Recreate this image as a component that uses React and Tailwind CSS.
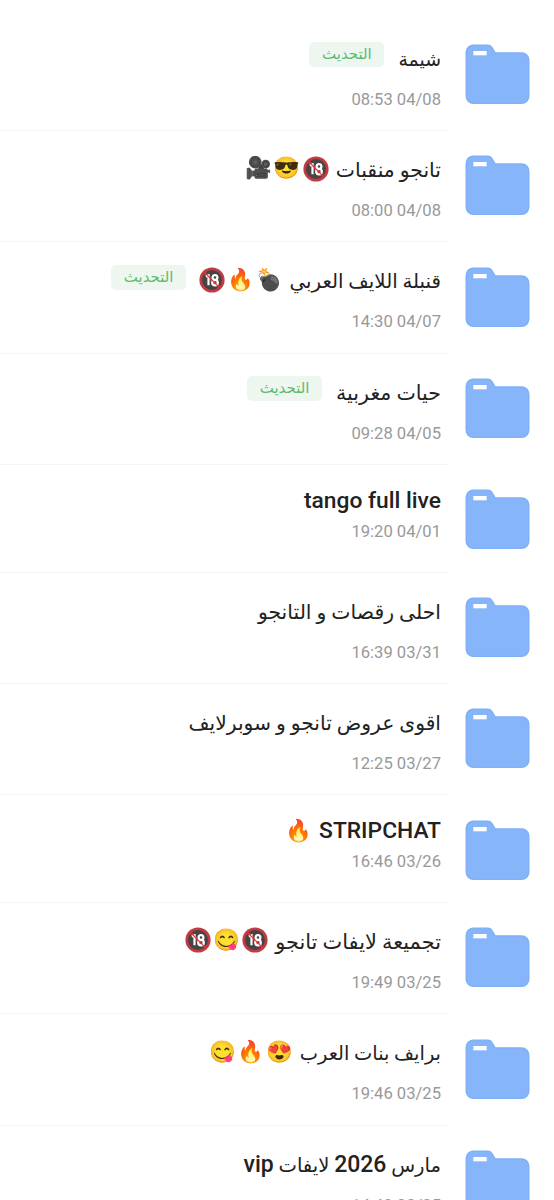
const folders = [
    { title: "شيمة", date: "08:53 04/08", updated: true, size: "text-[18.9px]" },
    { title: "تانجو منقبات", emojis: ["🔞", "😎", "🎥"], date: "08:00 04/08", size: "text-[20.4px]" },
    { title: "قنبلة اللايف العربي", emojis: ["💣", "🔥", "🔞"], date: "14:30 04/07", updated: true, size: "text-[19.8px]" },
    { title: "حيات مغربية", date: "09:28 04/05", updated: true, size: "text-[20.6px]" },
    { title: "tango full live", date: "19:20 04/01", latin: true },
    { title: "احلى رقصات و التانجو", date: "16:39 03/31", size: "text-[20.4px]" },
    { title: "اقوى عروض تانجو و سوبرلايف", date: "12:25 03/27", size: "text-[20.3px]" },
    { title: "STRIPCHAT", emojis: ["🔥"], date: "16:46 03/26", latin: true },
    { title: "تجميعة لايفات تانجو", emojis: ["🔞", "😋", "🔞"], date: "19:49 03/25", size: "text-[20.9px]" },
    { title: "برايف بنات العرب", emojis: ["😍", "🔥", "😋"], date: "19:46 03/25", size: "text-[19.4px]" },
    { title: "مارس 2026 لايفات vip", date: "14:49 03/25", size: "text-[19.6px]" },
];

function FolderIcon() {
    return (
        <svg width="65" height="61" viewBox="0 0 66 61" preserveAspectRatio="none" className="flex-none">
            <path
                d="M8.5.5H23c2.200 0 3.700.8 4.800 2.600L31 8.200H57.500a8 8 0 0 1 8 8V52a8 8 0 0 1-8 8H8.500a8 8 0 0 1-8-8V8.500a8 8 0 0 1 8-8Z"
                fill="#80b0f7"
            />
            <path
                d="M9 2H23c1.600 0 2.600.6 3.500 2L30.200 9.700H57a7 7 0 0 1 7 7V51.500a7 7 0 0 1-7 7H9a7 7 0 0 1-7-7V9a7 7 0 0 1 7-7Z"
                fill="#87b5fa"
            />
            <rect x="8.500" y="7" width="13.500" height="4.300" fill="#fff" />
        </svg>
    );
}

function Badge() {
    return (
        <span className="flex h-[25px] w-[75px] flex-none items-center justify-center rounded-[5px] bg-[#edf7f0] font-['DejaVu_Sans',sans-serif] text-[15px] text-[#5dba70]">
            التحديث
        </span>
    );
}

// Latin runs and digits are heavier than the Arabic around them
function Title({ text, latin, size }) {
    if (latin) return <span className="text-[22.8px]">{text}</span>;

    return (
        <span className={`pt-1 font-['DejaVu_Sans',sans-serif] font-normal [word-spacing:-1.5px] ${size}`}>
            {text.split(/([a-z0-9]+)/).map((part, idx) => (
                idx % 2 === 1
                    ? <span key={idx} className="font-[Roboto,sans-serif] text-[23px] font-medium">{part}</span>
                    : part
            ))}
        </span>
    );
}

function AdultSign() {
    return (
        <svg viewBox="0 0 26 26" role="img" aria-label="🔞" className="h-[26px] w-[26px] self-center">
            <circle cx="13" cy="13" r="12.600" fill="#c23a42" />
            <circle cx="13" cy="13" r="10" fill="#484444" />
            <path d="M5.500 5.500 20.500 20.500" stroke="#d8323c" strokeWidth="2.400" />
            <g fill="none" stroke="#fff" strokeWidth="2.200">
                <path d="M6.800 9.600 9.500 8.400V18.300" />
                <circle cx="16" cy="10.600" r="2.400" />
                <circle cx="16" cy="15.600" r="2.800" />
            </g>
            <path d="M7 7 18.800 18.800" stroke="#d8323c" strokeWidth="1.100" />
        </svg>
    );
}

function Emojis({ items }) {
    return (
        <span className="mr-[6px] flex font-['Noto_Color_Emoji',sans-serif] text-[21.5px] font-normal">
            {items.map((emoji, idx) => (
                <span key={idx} className={`flex w-[28.5px] justify-center ${emoji === "💣" ? "-scale-x-100" : ""}`}>
                    {emoji === "🔞" ? <AdultSign /> : emoji}
                </span>
            ))}
        </span>
    );
}

function FolderRow({ folder }) {
    const { title, emojis, date, updated, latin, size } = folder;

    return (
        <div className={`flex pr-6 ${latin ? "h-[107.6px]" : "h-[111.35px]"}`}>
            <div className="flex-none pt-[24.4px]">
                <FolderIcon />
            </div>
            <div className="mr-[17px] flex-1 border-b border-[#f5f5f5] pr-[7px]">
                <div className={`flex items-start ${latin ? "h-[57px] pt-[21px]" : "h-[70px] pt-[22.5px]"}`}>
                    <div className="flex h-[30px] items-center text-[23px] font-medium whitespace-nowrap text-[#222]">
                        <Title text={title} latin={latin} size={size} />
                        {emojis && <Emojis items={emojis} />}
                    </div>
                    {updated && (
                        <div className={emojis ? "mr-[12px]" : "mr-[14px]"}>
                            <Badge />
                        </div>
                    )}
                </div>
                <div dir="ltr" className="h-5 text-right text-[16.6px] leading-5 text-[#999]">{date}</div>
            </div>
        </div>
    );
}

export default function App() {
    return (
        <div dir="rtl" className="h-[1200px] w-[554px] overflow-hidden bg-white pt-[19.7px] font-[Roboto,'DejaVu_Sans',sans-serif]">
            {folders.map((folder, idx) => (
                <FolderRow key={idx} folder={folder} />
            ))}
        </div>
    );
}
